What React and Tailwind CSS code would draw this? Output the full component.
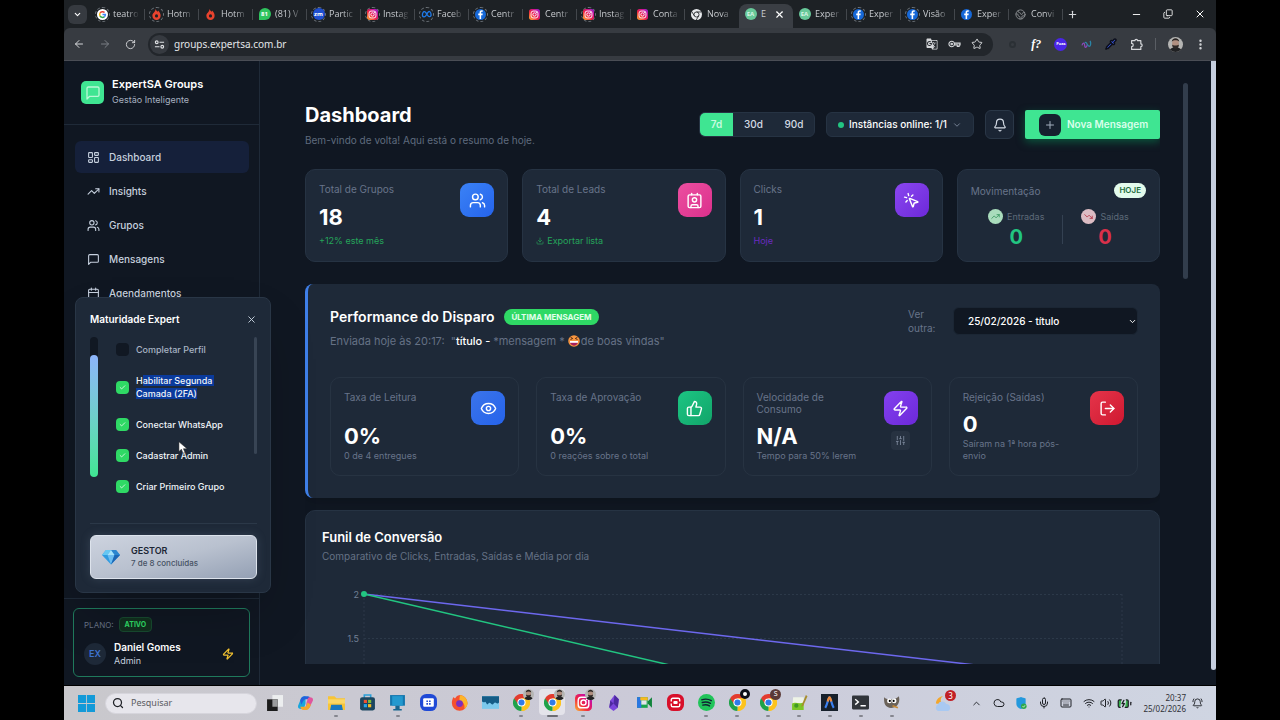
import React from "react";
import {
  ArrowLeft, ArrowRight, RotateCw, Star, Puzzle, Pipette, MoreVertical, Plus, X, Minus, Copy, ChevronDown, ChevronUp,
  LayoutDashboard, TrendingUp, TrendingDown, Users, Calendar, Check, Zap, Bell, MousePointerClick, Eye, ThumbsUp, LogOut,
  SlidersVertical, Download, Contact, Search, Cloud, Mic, Keyboard, Wifi, Volume2, BatteryCharging, BellRing, Earth,
} from "lucide-react";
import { MdGTranslate } from "react-icons/md";

const Facebook = () => (
  <svg viewBox="0 0 24 24" className="size-[11px]"><circle cx="12" cy="12" r="12" fill="#1668d8" /><path d="M13.4 22v-8.6h3l.5-3.5h-3.5V7.8c0-1 .4-1.8 1.9-1.8H17V3c-.5-.1-1.400-.2-2.300-.2-2.900 0-4.700 1.700-4.700 4.700v2.400H7v3.500h3V22z" fill="#fff" /></svg>
);
const Instagram = ({ className = "size-[11px]" }) => (
  <svg viewBox="0 0 24 24" className={className}>
    <defs><linearGradient id="ig" x1="0" y1="1" x2="1" y2="0"><stop offset="0" stopColor="#fdb833" /><stop offset=".4" stopColor="#f0263f" /><stop offset=".7" stopColor="#d3118d" /><stop offset="1" stopColor="#8a2be2" /></linearGradient></defs>
    <rect width="24" height="24" rx="6" fill="url(#ig)" />
    <g fill="none" stroke="#fff" strokeWidth="2"><rect x="4.500" y="4.500" width="15" height="15" rx="4.500" /><circle cx="12" cy="12" r="3.600" /></g><circle cx="16.500" cy="7.500" r="1.200" fill="#fff" />
  </svg>
);
const Google = () => (
  <svg viewBox="0 0 24 24" className="size-[11px]"><circle cx="12" cy="12" r="12" fill="#fff" /><g fill="none" strokeWidth="3.400"><path d="M16.500 7.800A6.200 6.200 0 0 0 6.600 9" stroke="#ea4335" /><path d="M6.600 9a6.300 6.300 0 0 0 0 6" stroke="#fbbc05" /><path d="M6.600 15a6.200 6.200 0 0 0 9.400 2" stroke="#34a853" /><path d="M16 17a6.200 6.200 0 0 0 2.200-5H12" stroke="#4285f4" /></g></svg>
);
const Flame = () => (
  <svg viewBox="0 0 24 24" className="size-[11px]"><path d="M10 0c1 4 3 4 5 6 .6-.8.7-1.600.6-2.500C19 6.500 21 11 21 14.500 21 20 17 24 12 24s-9-4-9-9.500C3 9 9 7.500 10 0z" fill="#e8432e" /><circle cx="12" cy="15" r="3.400" fill="#1c2024" /></svg>
);
const ChromeLogo = ({ className = "size-[17px]" }) => (
  <svg viewBox="0 0 24 24" className={className}>
    <path d="M12 12V0A12 12 0 0 1 12 24z" fill="#fcc31e" />
    <path d="M12 12v12A12 12 0 0 1 1.600 6z" fill="#1fa24a" />
    <path d="M12 6.500 22.400 6A12 12 0 0 0 1.600 6L7.200 14.500z" fill="#e33b2e" />
    <path d="M17 9.500 12 24a12 12 0 0 0 10.400-18H12z" fill="#fcc31e" />
    <circle cx="12" cy="12" r="5.800" fill="#fff" /><circle cx="12" cy="12" r="4.300" fill="#2f7be8" />
  </svg>
);
const ChromeMono = () => (
  <svg viewBox="0 0 24 24" className="size-[11px]"><circle cx="12" cy="12" r="12" fill="#e8eaed" /><g fill="none" stroke="#1d2125" strokeWidth="1.800"><circle cx="12" cy="12" r="5.500" /><path d="M12 6.500h11M7.200 14.800 1.700 5.500M16.800 14.800 11.500 24" /></g></svg>
);
const Meta = () => (
  <svg viewBox="0 0 24 24" className="size-[12px]"><path d="M3 15.500C2 10 5.500 5.500 8.500 8c2.500 2 4.500 8 7 9 3 1 5-.500 4.600-4C19.600 8 17 5.600 14.500 8c-2 2-3.500 6-5.500 8.300-2 2-5.500 1.700-6-.8z" fill="none" stroke="#1f7ae8" strokeWidth="2.600" /></svg>
);
const Round = ({ color, children }) => (
  <span className={`flex size-[12px] items-center justify-center rounded-full text-[6px] font-bold leading-none ${color}`}>{children}</span>
);
const Whats = () => (
  <span className="flex size-[12px] items-center justify-center rounded-full rounded-bl-[2px] bg-[#2fc45e] text-[6px] font-bold leading-none text-white">81</span>
);
const Expert = () => <Round color="bg-[#68c99a] text-[#d8f5e6]">EA</Round>;

const tabs = [
  { t: "teatro", i: <Google />, ring: true, sep: true },
  { t: "Hotm", i: <Flame />, ring: true, sep: true },
  { t: "Hotm", i: <Flame />, sep: true },
  { t: "(81) V", i: <Whats />, sep: true },
  { t: "Partic", i: <Round color="bg-[#1f4fd0] text-white">zm</Round>, ring: true, sep: true },
  { t: "Instag", i: <Instagram />, ring: true, sep: true },
  { t: "Faceb", i: <Meta />, ring: true, sep: true },
  { t: "Centr", i: <Facebook />, ring: true, sep: true },
  { t: "Centr", i: <Instagram />, sep: true },
  { t: "Instag", i: <Instagram />, ring: true, sep: true },
  { t: "Conta", i: <Instagram />, sep: true },
  { t: "Nova", i: <ChromeMono /> },
  { t: "E", i: <Expert />, active: true },
  { t: "Exper", i: <Expert />, sep: true },
  { t: "Exper", i: <Facebook />, ring: true, sep: true },
  { t: "Visão", i: <Facebook />, ring: true, sep: true },
  { t: "Exper", i: <Facebook />, sep: true },
  { t: "Convi", i: <Earth className="size-[11px] text-[#8a8d91]" />, sep: true },
];

function Browser() {
  return (
    <header className="shrink-0 bg-[#1d2125] font-['Open_Sans','Noto_Sans',sans-serif]">
      <div className="flex h-[28px] items-center">
        <button aria-label="Pesquisar guias" className="ml-1 flex size-[19px] items-center justify-center rounded-md bg-[#363a40] text-white"><ChevronDown className="size-[9px]" strokeWidth={3} /></button>
        <div className="ml-1 flex self-stretch">
          {tabs.map((tab, n) => (
            <button key={n} className={`flex w-[54px] items-center gap-[3px] pl-[4px] ${tab.active ? "mt-1 rounded-t-lg bg-[#3a3e44] pb-1" : ""}`}>
              <span className={`flex size-[15px] shrink-0 items-center justify-center rounded-full ${tab.ring ? "border border-dashed border-[#6f757b]" : ""}`}>{tab.i}</span>
              <span className={`text-left text-[9px] leading-[14px] whitespace-nowrap text-[#c9ccd0] ${tab.active ? "w-[8px]" : "flex-1 [mask-image:linear-gradient(to_right,#000_50%,transparent_95%)]"}`}>{tab.t}</span>
              {tab.active && <X className="ml-[2px] size-[11px] text-white" strokeWidth={2.5} />}
              <span className={`h-[11px] w-px ${tab.sep ? "bg-[#43474c]" : ""}`} />
            </button>
          ))}
        </div>
        <button aria-label="Nova guia" className="ml-1 text-[#d5d7da]"><Plus className="size-[11px]" strokeWidth={2.5} /></button>
        <div className="ml-auto flex items-center gap-[21px] pr-[10px] text-white">
          <button aria-label="Minimizar"><Minus className="size-[11px]" /></button>
          <button aria-label="Restaurar"><Copy className="size-[10px] -scale-x-100 rotate-180" /></button>
          <button aria-label="Fechar"><X className="size-[12px]" /></button>
        </div>
      </div>
      <div className="flex h-[33px] items-center rounded-t-md border-b border-[#4a4d55] bg-[#373b41] text-[#d5d7da]">
        <div className="flex w-[84px] items-center gap-[14px] pl-[9px]">
          <button aria-label="Voltar"><ArrowLeft className="size-[12px]" /></button>
          <button aria-label="Avançar" className="text-[#7b7f85]"><ArrowRight className="size-[12px]" /></button>
          <button aria-label="Recarregar"><RotateCw className="size-[11px]" /></button>
        </div>
        <div className="flex h-[23px] flex-1 items-center rounded-full bg-[#22262b] pr-[10px] pl-[2px]">
          <span className="flex size-[19px] items-center justify-center rounded-full bg-[#363a40]">
            <svg viewBox="0 0 12 12" className="size-[11px]" fill="none" stroke="#e0e2e5" strokeWidth="1.200"><circle cx="3" cy="3.500" r="1.500" /><path d="M6 3.500h5M1 8.500h5" /><circle cx="9" cy="8.500" r="1.500" /></svg>
          </span>
          <input aria-label="Endereço" defaultValue="groups.expertsa.com.br" className="ml-[5px] h-4 min-w-0 flex-1 bg-transparent font-['Noto_Sans','Open_Sans',sans-serif] text-[10px] text-[#e3e5e8] outline-none" />
          <div className="flex items-center gap-[10px]">
            <MdGTranslate className="size-[12px]" />
            <svg viewBox="0 0 14 8" className="h-[8px] w-[13px]" fill="none" stroke="#d5d7da" strokeWidth="1.200"><circle cx="4" cy="4" r="3" /><circle cx="4" cy="4" r=".8" /><path d="M7 3h6v2h-1v1.500h-2V5H7" /></svg>
            <Star className="size-[12px]" />
          </div>
        </div>
        <div className="flex items-center self-stretch pl-[14px] pr-[9px]">
          <div className="flex w-[136px] items-center justify-between">
            <span className="mx-[2px] size-[7px] rounded-full border-2 border-[#2b3035]" />
            <span className="font-['Liberation_Serif',serif] text-[12px] font-bold italic text-white">f?</span>
            <span className="flex size-[13px] items-center justify-center rounded-full bg-[#4a25e8] text-[4px] font-bold text-white">Poas</span>
            <svg viewBox="0 0 12 10" className="h-[9px] w-[11px]" fill="none" strokeWidth="1.400"><path d="M1 6c1-4 3-3 3 0s2 3 3-1" stroke="#8a4ab8" /><path d="M4 3c2-2 3 4 5 4s2-4 1-6" stroke="#2b86a8" /></svg>
            <Pipette className="size-[12px] fill-[#3d5ce8] text-[#0b0d18]" strokeWidth={3} />
            <svg viewBox="0 0 24 24" className="size-[13px]" fill="none" stroke="currentColor" strokeWidth="2.200" strokeLinejoin="round"><path d="M3 5h6a2.500 2.500 0 0 1 5 0h6v6a2.500 2.500 0 0 1 0 5v5H3v-5a3 3 0 0 0 0-6z" /></svg>
          </div>
          <span className="mx-[12px] h-[12px] w-px bg-[#5a5e64]" />
          <Avatar className="size-[15px]" />
          <button aria-label="Menu" className="ml-[11px]"><MoreVertical className="size-[13px]" strokeWidth={2.5} /></button>
        </div>
      </div>
    </header>
  );
}

function Avatar({ className }) {
  return (
    <svg viewBox="0 0 16 16" className={`rounded-full ${className}`}><rect width="16" height="16" fill="#b5b5b3" /><path d="M1 16c1-4 4-5 7-5s6 1 7 5z" fill="#202123" /><ellipse cx="8" cy="7" rx="3.600" ry="4.800" fill="#b08f80" /><path d="M4 5c0-5 8-5 8 0-2-2-6-2-8 0zM4.400 8c1 1.500 6 1.500 7.200 0 .4 6-7.400 6-7.200 0z" fill="#2c2725" /></svg>
  );
}

const Bubble = ({ className }) => (
  <svg viewBox="0 0 24 24" className={className} fill="none" stroke="currentColor" strokeWidth="2" strokeLinecap="round" strokeLinejoin="round"><path d="M21 15a2 2 0 0 1-2 2H7l-4 4V5a2 2 0 0 1 2-2h14a2 2 0 0 1 2 2z" /></svg>
);

const nav = [
  ["Dashboard", LayoutDashboard],
  ["Insights", TrendingUp],
  ["Grupos", Users],
  ["Mensagens", Bubble],
  ["Agendamentos", Calendar],
];

function Task({ children, done, id }) {
  return (
    <li className="flex items-center gap-[7px]">
      <span className="relative flex size-[13px] shrink-0">
        <input id={id} type="checkbox" defaultChecked={done} className={`size-[13px] appearance-none rounded ${done ? "bg-[#2fd965]" : "bg-[#111823]"}`} />
        {done && <Check className="pointer-events-none absolute inset-[3px] size-[7px] text-white" strokeWidth={2.5} />}
      </span>
      <label htmlFor={id} className={`text-[9px] leading-[13px] font-medium ${done ? "text-[#f1f5f9]" : "text-[#a9b4c4]"}`}>{children}</label>
    </li>
  );
}

function Maturity() {
  return (
    <section className="absolute bottom-[92px] left-[11px] z-10 w-[196px] rounded-lg border border-[#293646] bg-[#1e2938] pt-[13px] pr-[13px] pb-[13px] pl-[14px] shadow-2xl">
      <div className="flex h-[16px] items-center justify-between">
        <h2 className="text-[10px] font-semibold text-white">Maturidade Expert</h2>
        <button aria-label="Fechar painel" className="text-[#cbd5e1]"><X className="size-[11px]" /></button>
      </div>
      <div className="mt-[10px] flex h-[187px] border-b border-[#2b3848]">
        <div className="flex h-[140px] w-[8px] flex-col rounded-full bg-[#111823] pt-[18px]">
          <div className="flex-1 rounded-full bg-linear-to-b from-[#8db4fb] to-[#3fe592]" />
        </div>
        <ul className="ml-[18px] flex w-[120px] flex-col gap-[18px] pt-[6px]">
          <Task id="t1">Completar Perfil</Task>
          <Task id="t2" done>H<span className="bg-[#0a3a9c] pr-[2px]">abilitar Segunda</span><br /><span className="bg-[#0a3a9c]">Camada (2FA)</span></Task>
          <Task id="t3" done>Conectar WhatsApp</Task>
          <Task id="t4" done>Cadastrar Admin</Task>
          <Task id="t5" done>Criar Primeiro Grupo</Task>
        </ul>
        <div className="ml-auto h-[117px] w-[3px] rounded-full bg-[#384454]" />
      </div>
      <button className="mt-[11px] flex h-[44px] w-full items-center gap-[11px] rounded-md border border-[#dde3ec] bg-linear-to-br from-[#cdd3df] via-[#b9c1cf] to-[#94a0b4] pl-[11px] text-left shadow-[0_0_10px_#64748b55]">
        <svg viewBox="0 0 18 16" className="h-[16px] w-[18px]"><path d="M4 1h10l4 5-9 9.500L0 6z" fill="#2f9be0" /><path d="M4 1h5L5.500 6H0z" fill="#66c7f2" /><path d="M9 1h5l4 5h-5.500z" fill="#2b86cf" /><path d="M9 1 5.500 6h7z" fill="#a5e2fa" /><path d="M5.500 6h7L9 15.500z" fill="#6bbcf0" /><path d="M12.500 6H18l-9 9.500z" fill="#1c66b5" /></svg>
        <span className="flex flex-col">
          <span className="text-[9px] leading-[12px] font-semibold text-[#1c2635]">GESTOR</span>
          <span className="text-[8px] leading-[12px] font-medium text-[#475264]">7 de 8 concluídas</span>
        </span>
      </button>
      <svg viewBox="0 0 12 16" className="absolute top-[143px] left-[102px] h-[13px] w-[10px]"><path d="M1 1v12l3-3 2 5 2.500-1-2-4.500H11z" fill="#fff" stroke="#222" strokeWidth=".6" /></svg>
    </section>
  );
}

function Sidebar() {
  return (
    <aside className="relative flex w-[196px] shrink-0 flex-col border-r border-[#1f2a38]">
      <div className="flex h-[64px] items-center gap-[8px] border-b border-[#1f2a38] pl-[17px]">
        <span className="flex size-[23px] items-center justify-center rounded-[5px] bg-[#3fe592] text-[#b9f8d6]"><Bubble className="size-[16px]" /></span>
        <div className="mb-[2px] flex flex-col">
          <span className="text-[11px] leading-[16px] font-semibold text-white">ExpertSA Groups</span>
          <span className="text-[9px] leading-[15px] text-[#a7b1c0]">Gestão Inteligente</span>
        </div>
      </div>
      <nav className="flex flex-col gap-[2px] pt-[16px] pr-[10px] pl-[11px]">
        {nav.map(([name, Icon], n) => (
          <a key={name} href={`#${name}`} className={`flex h-[32px] items-center gap-[9px] rounded-md pl-[12px] text-[10px] font-medium text-[#c6d0de] ${n === 0 ? "bg-[#15203a]" : ""}`}>
            <Icon className="size-[13px]" />{name}
          </a>
        ))}
      </nav>
      <div className="mt-auto border-t border-[#1f2a38] px-[9px] pt-[9px] pb-[8px]">
        <div className="h-[69px] rounded-md border border-[#1f7a5c] px-[10px] pt-[8px]">
          <div className="flex items-center gap-[5px]">
            <span className="text-[8px] text-[#667284]">PLANO:</span>
            <span className="rounded border border-[#17492f] bg-[#12301f] px-[5px] text-[7px] leading-[13px] font-bold text-[#2fd965]">ATIVO</span>
          </div>
          <div className="mt-[8px] flex items-center">
            <span className="flex size-[22px] items-center justify-center rounded-full bg-[#1e2938] text-[9px] font-semibold text-[#3f74d1]">EX</span>
            <div className="ml-[8px] flex flex-col">
              <span className="text-[10px] leading-[14px] font-semibold text-white">Daniel Gomes</span>
              <span className="text-[9px] leading-[13px] text-[#c6d0de]">Admin</span>
            </div>
            <Zap className="mr-[5px] ml-auto size-[12px] text-[#f5c431]" strokeWidth={2.5} />
          </div>
        </div>
      </div>
      <Maturity />
    </aside>
  );
}

const card = "rounded-[10px] border border-[#263343] bg-[#1e2938]";

function Tile({ className, children }) {
  return <span className={`flex size-[34px] shrink-0 items-center justify-center rounded-[9px] bg-linear-to-br text-white ${className}`}>{children}</span>;
}

function Stat({ label, value, note, noteClass, tile, icon }) {
  return (
    <article className={`flex h-[93px] justify-between p-[13px] ${card}`}>
      <div className="flex flex-col">
        <h3 className="text-[10px] leading-[12px] text-[#68748a]">{label}</h3>
        <strong className="mt-[8px] text-[22px] leading-[28px] font-bold text-white">{value}</strong>
        <p className={`mt-[3px] flex items-center gap-[3px] text-[9px] leading-[14px] ${noteClass}`}>{note}</p>
      </div>
      <Tile className={tile}>{icon}</Tile>
    </article>
  );
}

function Flow({ label, value, icon, dot, color }) {
  return (
    <div className="flex flex-col items-center">
      <div className="flex items-center gap-[4px]">
        <span className={`flex size-[15px] items-center justify-center rounded-full ${dot}`}>{icon}</span>
        <span className="text-[9px] leading-[15px] text-[#5d6979]">{label}</span>
      </div>
      <strong className={`text-[20px] leading-[26px] font-bold ${color}`}>{value}</strong>
    </div>
  );
}

function Metric({ label, value, note, tile, icon, tune }) {
  return (
    <article className="flex h-[99px] justify-between rounded-[10px] border border-[#273342] p-[13px]">
      <div className="flex flex-1 flex-col">
        <h3 className="text-[10px] leading-[12px] text-[#68748a]">{label}</h3>
        <div className="mt-auto">
          <strong className="block text-[22px] leading-[28px] font-bold text-white">{value}</strong>
          <p className="text-[9px] leading-[12px] text-[#68748a]">{note}</p>
        </div>
      </div>
      <div className="flex flex-col items-center gap-[6px]">
        <Tile className={tile}>{icon}</Tile>
        {tune && <button aria-label="Ajustar" className="flex size-[19px] items-center justify-center rounded bg-[#273241] text-[#7a8699]"><SlidersVertical className="size-[11px]" /></button>}
      </div>
    </article>
  );
}

const Laugh = () => (
  <svg viewBox="0 0 12 12" className="mr-px inline-block size-[12px] align-[-2px]"><circle cx="6" cy="6" r="5.800" fill="#f6953f" /><path d="M1.800 6h8.400C10 12.200 2 12.200 1.800 6z" fill="#a81f5c" /><path d="M2 6h8v1.800H2z" fill="#fff" /><path d="m2.500 2.200 2.200 1.300-2.200 1M9.500 2.200 7.300 3.500l2.200 1" fill="none" stroke="#4a2010" strokeWidth=".9" /></svg>
);

function Main() {
  return (
    <main className="flex min-w-0 flex-1 pt-[22px] pr-[23px] pb-[21px] pl-[45px]">
      <div className="min-w-0 flex-1 overflow-hidden">
        <div className="flex items-center justify-between pt-[18px]">
          <div>
            <h1 className="text-[20px] leading-[28px] font-bold text-white">Dashboard</h1>
            <p className="mt-[3px] text-[10px] leading-[16px] text-[#5f6b7e]">Bem-vindo de volta! Aqui está o resumo de hoje.</p>
          </div>
          <div className="flex items-center gap-[11px]">
            <div className="flex h-[25px] overflow-hidden rounded-md border border-[#263343] bg-[#1e2938] text-[10px] font-medium text-[#d3dae4]">
              <button className="w-[33px] bg-[#3fe592] font-semibold text-[#c9fbe0]">7d</button>
              <button className="w-[41px]">30d</button>
              <button className="w-[40px]">90d</button>
            </div>
            <button className="flex h-[25px] w-[148px] items-center rounded-md border border-[#263343] bg-[#1e2938] pr-[11px] pl-[11px] text-[10px] font-medium whitespace-nowrap text-white">
              <span className="mr-[5px] size-[6px] rounded-full bg-[#22c581]" />Instâncias online: 1/1<ChevronDown className="ml-auto size-[10px] text-[#8390a3]" />
            </button>
            <button aria-label="Notificações" className="flex size-[29px] items-center justify-center rounded-md border border-[#2a3747] bg-[#1b2534] text-[#d3dae4]"><Bell className="size-[14px]" /></button>
            <button className="flex h-[29px] w-[135px] items-center gap-[6px] rounded-[2px] bg-[#3fe592] pl-[14px] text-[10px] font-semibold text-[#d9ffeb] shadow-[0_3px_8px_#0b553d]">
              <span className="flex size-[22px] items-center justify-center rounded-md bg-[#16202e] text-[#a3afbf]"><Plus className="size-[12px]" /></span>Nova Mensagem
            </button>
          </div>
        </div>

        <div className="mt-[21px] grid grid-cols-4 gap-[14px]">
          <Stat label="Total de Grupos" value="18" note="+12% este mês" noteClass="text-[#25a55a]" tile="from-[#3b82f6] to-[#2563eb]" icon={<Users className="size-[17px]" />} />
          <Stat label="Total de Leads" value="4" note={<><Download className="size-[8px]" />Exportar lista</>} noteClass="text-[#25a55a]" tile="from-[#ec4ea0] to-[#db2f8c]" icon={<Contact className="size-[17px]" />} />
          <Stat label="Clicks" value="1" note="Hoje" noteClass="text-[#6b2bc0]" tile="from-[#8b46f0] to-[#6d28d9]" icon={<MousePointerClick className="size-[17px]" />} />
          <article className={`flex h-[93px] flex-col p-[13px] ${card}`}>
            <div className="flex items-center justify-between">
              <h3 className="text-[10px] leading-[14px] text-[#68748a]">Movimentação</h3>
              <span className="rounded-full bg-[#e3fbec] px-[5px] text-[8px] leading-[15px] font-semibold text-[#1c6b3c]">HOJE</span>
            </div>
            <div className="mt-[11px] flex items-center justify-center gap-[18px]">
              <Flow label="Entradas" value="0" icon={<TrendingUp className="size-[9px] text-[#2c8f55]" />} dot="bg-[#a9dcbc]" color="text-[#22c581]" />
              <span className="h-[29px] w-px bg-[#344152]" />
              <Flow label="Saídas" value="0" icon={<TrendingDown className="size-[9px] text-[#b3263a]" />} dot="bg-[#dcbcc3]" color="text-[#d9304a]" />
            </div>
          </article>
        </div>

        <section className="mt-[22px] rounded-[8px] border-l-[3px] border-[#3f7fe8] bg-[#1e2938] px-[22px] pt-[23px] pb-[22px] shadow-lg">
          <div className="flex h-[44px] items-start justify-between">
            <div>
              <div className="flex items-center gap-[10px]">
                <h2 className="text-[14px] leading-[20px] font-semibold text-white">Performance do Disparo</h2>
                <span className="rounded-full bg-[#2fd965] px-[7px] text-[8px] leading-[16px] font-bold text-[#e2ffec]">ÚLTIMA MENSAGEM</span>
              </div>
              <p className="mt-[6px] text-[11px] leading-[16px] text-[#657185]">Enviada hoje às 20:17:&nbsp; "<strong className="font-medium text-white">título - </strong>*mensagem * <Laugh />de boas vindas"</p>
            </div>
            <div className="flex items-center gap-[17px]">
              <label htmlFor="msg" className="w-[28px] text-[10px] leading-[14px] text-[#68748a]">Ver outra:</label>
              <div className="relative">
                <select id="msg" className="block h-[28px] w-[185px] appearance-none rounded-md border border-[#1b2634] bg-[#101722] pl-[14px] text-[10px] font-medium text-white">
                  <option>25/02/2026 - título</option>
                </select>
                <ChevronDown className="pointer-events-none absolute top-[10px] right-[1px] size-[9px] text-white" strokeWidth={2.5} />
              </div>
            </div>
          </div>
          <div className="mt-[26px] grid grid-cols-4 gap-[17px]">
            <Metric label="Taxa de Leitura" value="0%" note="0 de 4 entregues" tile="from-[#3b74ea] to-[#2563eb]" icon={<Eye className="size-[17px]" />} />
            <Metric label="Taxa de Aprovação" value="0%" note="0 reações sobre o total" tile="from-[#1cc583] to-[#12a56a]" icon={<ThumbsUp className="size-[17px]" />} />
            <Metric label={<>Velocidade de<br />Consumo</>} value="N/A" note="Tempo para 50% lerem" tile="from-[#8340ef] to-[#6d28d9]" icon={<Zap className="size-[17px]" />} tune />
            <Metric label="Rejeição (Saídas)" value="0" note={<>Saíram na 1ª hora pós-<br />envio</>} tile="from-[#e5344a] to-[#cf1630]" icon={<LogOut className="size-[17px]" />} />
          </div>
        </section>

        <section className="mt-[12px] rounded-[10px] border border-[#263343] bg-[#1e2938] px-[16px] pt-[17px]">
          <h2 className="text-[13px] leading-[18px] font-semibold text-white">Funil de Conversão</h2>
          <p className="mt-[2px] text-[10px] leading-[16px] text-[#657185]">Comparativo de Clicks, Entradas, Saídas e Média por dia</p>
          <svg viewBox="0 0 821 180" className="mt-[16px] block w-full">
            <g stroke="#2c3949" strokeDasharray="2 2"><path d="M42 14.500H800M42 58.500H800M42 102.500H800M42 14v160M800 14v160" fill="none" /></g>
            <g fill="#718096" fontSize="9" textAnchor="end" fontFamily="Inter"><text x="37" y="18">2</text><text x="37" y="62">1.5</text></g>
            <path d="M42 14 800 102" stroke="#6d68ee" strokeWidth="1.500" fill="none" />
            <path d="M42 14 800 190" stroke="#22c581" strokeWidth="1.500" fill="none" />
            <circle cx="42" cy="14" r="3" fill="#22c581" />
          </svg>
        </section>
      </div>
      <div className="ml-[23px] h-[196px] w-[5px] rounded-full bg-[#323d4c]" />
    </main>
  );
}

const Win = () => <svg viewBox="0 0 16 16" className="size-[17px]" fill="#139ad8"><path d="M0 0h7.600v7.600H0zM8.400 0H16v7.600H8.400zM0 8.400h7.600V16H0zM8.400 8.400H16V16H8.400z" /></svg>;

const apps = [
  { n: "Visão de tarefas", i: <><path d="M6 1h10v11H6z" fill="#eceeef" /><path d="M1 5h10v11H1z" fill="#1b1b1b" /><path d="M6 5h5v7H6z" fill="#9a9b9d" /></> },
  { n: "Copilot", i: <><path d="M8 2C5 2 4 3 3 6L1 11c-.5 2 1 3 3 3h1c2 0 2-2 3-5z" fill="#19a6dc" /><path d="M3 6c1-3 2-4 5-4h2c2 0 2 1 3 3H8C6 5 5 9 4 10z" fill="#2261dc" /><path d="M8 14c3 0 4-1 5-4l2-4c.5-2-1-3-3-3-2 0-2 2-3 5z" fill="#e0559d" /><path d="M13 10c-1 3-2 5-5 5H6c-1.500 0-2-1-3-3h4c2 0 2-2 3-4z" fill="#f3a82c" /></> },
  { n: "Explorador", dot: 1, i: <><path d="M0 2h6l2 2h8v11H0z" fill="#f7c437" /><path d="M3 10h10l1 5H2z" fill="#1878c0" /><path d="M0 5h16v4H0z" fill="#fad766" /></> },
  { n: "Loja", i: <><path d="M5 4V1h6v3" fill="none" stroke="#2a9fd8" strokeWidth="1.500" /><rect x="1" y="3" width="14" height="12.500" rx="2" fill="#1b4660" /><path d="M4.500 5.500h3v3h-3z" fill="#ef5133" /><path d="M8.500 5.500h3v3h-3z" fill="#7fbc3a" /><path d="M4.500 9.500h3v3h-3z" fill="#28a4e8" /><path d="M8.500 9.500h3v3h-3z" fill="#f9bc1f" /></> },
  { n: "Computador", dot: 1, i: <><path d="M1 1h14v10H1z" fill="#1477ae" /><path d="M3 2h10v9H3z" fill="#2399cf" /><path d="M6 11h4v3h2v1.500H4V14h2z" fill="#17668f" /></> },
  { n: "Agenda", i: <><rect width="16" height="16" rx="6" fill="#1f49d6" /><rect x="3" y="4" width="10" height="8" rx="1" fill="#fff" /><path d="M6 6h1.500v1.500H6zM8.500 6H10v1.500H8.500zM6 8.500h1.500V10H6zM8.500 8.500H10V10H8.500z" fill="#1f49d6" /></> },
  { n: "Firefox", i: <><path d="M2 3c1 0 1 1 2 1 1-2 3-3 5-3 4 1 6.500 4 6.500 8A7.300 7.300 0 0 1 8 15.800 7.300 7.300 0 0 1 .8 8.500C.8 6 1.500 5 2 3z" fill="#f5502f" /><path d="M9 1c4 1 6.500 4 6.500 8 0 2-1 4-3 5 1-4-1-7-4.500-8C8 4 8 2 9 1z" fill="#fdb52a" /><circle cx="8" cy="9" r="3.200" fill="#7a2fc0" /></> },
  { n: "Monitor", i: <><path d="M0 2h16v12H0z" fill="#7cc9ec" /><path d="M0 2h16v6c-2 3-3-2-5 1S8 6 6 9 4 5 2 8L0 7z" fill="#155c86" /></> },
  { n: "Chrome", chrome: 1, dot: 1, person: 1 },
  { n: "Chrome ativo", chrome: 1, active: 1, person: 1 },
  { n: "Instagram", insta: 1, dot: 1, person: 1 },
  { n: "Obsidian", i: <><path d="m9 1 4 4-1 8-4 3-4-3 1-7z" fill="#7b46dc" /><path d="m9 1-1 8 4 4 1-8zM5 6l3 3-4 4z" fill="#4d2aa0" /></> },
  { n: "Meet", i: <><path d="M1 3h10v10H1z" fill="#18a64c" /><path d="M1 3h4v10H1z" fill="#2a76e4" /><path d="M4 3h7v3H4z" fill="#f9b91c" /><path d="m11 7 4-4v10l-4-4z" fill="#12843b" /><path d="M5 6h5v4H5z" fill="#e4e5ec" /></> },
  { n: "Gravador", i: <><rect width="16" height="16" rx="6" fill="#d80f2a" /><path d="M4 7V5.500Q4 4 5.500 4h5Q12 4 12 5.500V7M4 9v1.500Q4 12 5.500 12h5q1.500 0 1.500-1.500V9" fill="none" stroke="#fff" strokeWidth="1.300" /><rect x="6" y="6.500" width="4" height="3" rx="1" fill="#fff" /></> },
  { n: "Spotify", dot: 1, i: <><circle cx="8" cy="8" r="8" fill="#21c45a" /><path d="M3.500 5.500c3-1 6.500-.7 9 .8M4 8c2.500-.8 5.500-.5 7.700.8M4.500 10.500c2-.6 4.500-.4 6.300.7" fill="none" stroke="#123" strokeWidth="1.300" strokeLinecap="round" /></> },
  { n: "Chrome 3", chrome: 1, dot: 1, disc: 1 },
  { n: "Chrome 4", chrome: 1, dot: 1, letter: "S" },
  { n: "Notepad", dot: 1, i: <><path d="M2 3h10v12H1z" fill="#eef3e6" /><path d="M1 9c3-2 7 1 11-1v7H1z" fill="#7cc628" /><path d="m14 1 1.500 1-4 9-2 1z" fill="#a78d2c" /><circle cx="5" cy="11" r="2" fill="#3f9a22" /></> },
  { n: "Antigravity", dot: 1, i: <><rect width="16" height="16" fill="#17202b" /><path d="M4 13C6 10 7 3 8 3s2 7 4 10" fill="none" stroke="#3b80ef" strokeWidth="2" /><path d="M6.300 7C7 4 7.500 3 8 3s1 1 1.700 4" fill="none" stroke="#ef8b3a" strokeWidth="2" /></> },
  { n: "Terminal", dot: 1, i: <><rect y="1.500" width="16" height="13" rx="1" fill="#31353a" /><path d="m3 5 3 2.500L3 10M8 11h5" fill="none" stroke="#fff" strokeWidth="1.300" /></> },
  { n: "Gimp", dot: 1, i: <><path d="M1 3c2 2 4 2 6 2s5 0 8-3c1 4 0 7-2 9s-6 3-9 1-3-5-3-9z" fill="#6a6259" /><circle cx="6" cy="6.500" r="2.200" fill="#fff" /><circle cx="10.500" cy="6.500" r="2.200" fill="#fff" /><circle cx="6.400" cy="6.500" r="1" /><circle cx="10" cy="6.500" r="1" /><path d="m9 11 5 2" stroke="#c78a35" strokeWidth="1.500" /></> },
];

function Taskbar() {
  return (
    <footer className="flex h-[34px] shrink-0 items-center bg-linear-to-r from-[#c9c8cc] via-[#cbcad8] to-[#cfd5e2] font-['Noto_Sans','Open_Sans',sans-serif] text-[#1f2126]">
      <button aria-label="Iniciar" className="ml-[14px]"><Win /></button>
      <label className="ml-[10px] flex h-[21px] w-[152px] shrink-0 items-center gap-[7px] rounded-full border border-[#d6d5dc] bg-[#e7e6ec] pl-[6px]">
        <Search className="size-[12px]" strokeWidth={2.5} />
        <input aria-label="Pesquisar" placeholder="Pesquisar" className="w-[100px] bg-transparent text-[9px] outline-none placeholder:text-[#5a5b61]" />
      </label>
      <div className="ml-[2px] flex flex-1">
        {apps.map((a) => (
          <button key={a.n} aria-label={a.n} className="flex flex-1 flex-col items-center">
            <span className={`relative flex size-[26px] items-center justify-center rounded ${a.active ? "bg-[#e4e3ea]" : ""}`}>
              {a.chrome ? <ChromeLogo /> : a.insta ? <Instagram className="size-[17px]" /> : <svg viewBox="0 0 16 16" className="size-[17px]">{a.i}</svg>}
              {a.person && <Avatar className="absolute top-0 right-0 size-[11px]" />}
              {a.disc && <span className="absolute top-0 right-0 size-[10px] rounded-full border-[3px] border-[#0d0f18] bg-white" />}
              {a.letter && <span className="absolute top-0 right-0 flex size-[11px] items-center justify-center rounded-full bg-[#5a3a38] text-[7px] text-white">{a.letter}</span>}
            </span>
            <span className={`h-[2px] rounded-full ${a.active ? "w-[11px] bg-[#6b6c74]" : a.dot ? "w-[4px] bg-[#85868f]" : "w-[4px]"}`} />
          </button>
        ))}
      </div>
      <div className="flex w-[309px] shrink-0 items-center">
        <button aria-label="Clima" className="relative ml-[25px] flex size-[20px] items-center justify-center">
          <svg viewBox="0 0 20 18" className="h-[17px] w-[19px]"><path d="M11 1C8 2 7 7 10 10L3 9c0-4 4-8 8-8z" fill="#f3a72e" /><path d="M5 17a4 4 0 0 1 0-7 5 5 0 0 1 9-.500A4 4 0 0 1 16 17z" fill="#a9c9f2" /></svg>
          <span className="absolute -top-[3px] -right-[4px] flex size-[11px] items-center justify-center rounded-full bg-[#c11f26] text-[8px] leading-none text-white">3</span>
        </button>
        <div className="ml-[19px] flex w-[161px] items-center justify-between">
          <ChevronUp className="size-[11px]" />
          <Cloud className="size-[12px]" />
          <svg viewBox="0 0 12 14" className="h-[13px] w-[12px]"><path d="M6 0c2 1 3 1 5 1.500V7c0 3-2 5-5 6-3-1-5-3-5-6V1.500C3 1 4 1 6 0z" fill="#2499dd" /><circle cx="9" cy="10" r="3" fill="#2fa84a" /><path d="m7.700 10 1 1 1.600-2" fill="none" stroke="#fff" strokeWidth=".8" /></svg>
          <Mic className="size-[12px]" />
          <Keyboard className="size-[12px]" />
          <div className="flex items-center gap-[5px]">
            <Wifi className="size-[12px]" /><Volume2 className="size-[12px]" /><BatteryCharging className="size-[15px] fill-[#37b24d]" />
          </div>
        </div>
        <div className="ml-auto text-right text-[8px] leading-[11px] text-[#303238]">20:37<br />25/02/2026</div>
        <BellRing className="mr-[13px] ml-[6px] size-[11px]" />
      </div>
    </footer>
  );
}

export default function App() {
  return (
    <div className="h-screen bg-black px-16 font-['Inter',sans-serif]">
      <div className="flex h-full flex-col overflow-hidden">
        <Browser />
        <div className="flex min-h-0 flex-1 border-b border-black bg-[#101722]">
          <Sidebar />
          <Main />
          <div className="mb-[15px] w-[5px] shrink-0 rounded-b bg-[#c5cede]" />
        </div>
        <Taskbar />
      </div>
    </div>
  );
}
